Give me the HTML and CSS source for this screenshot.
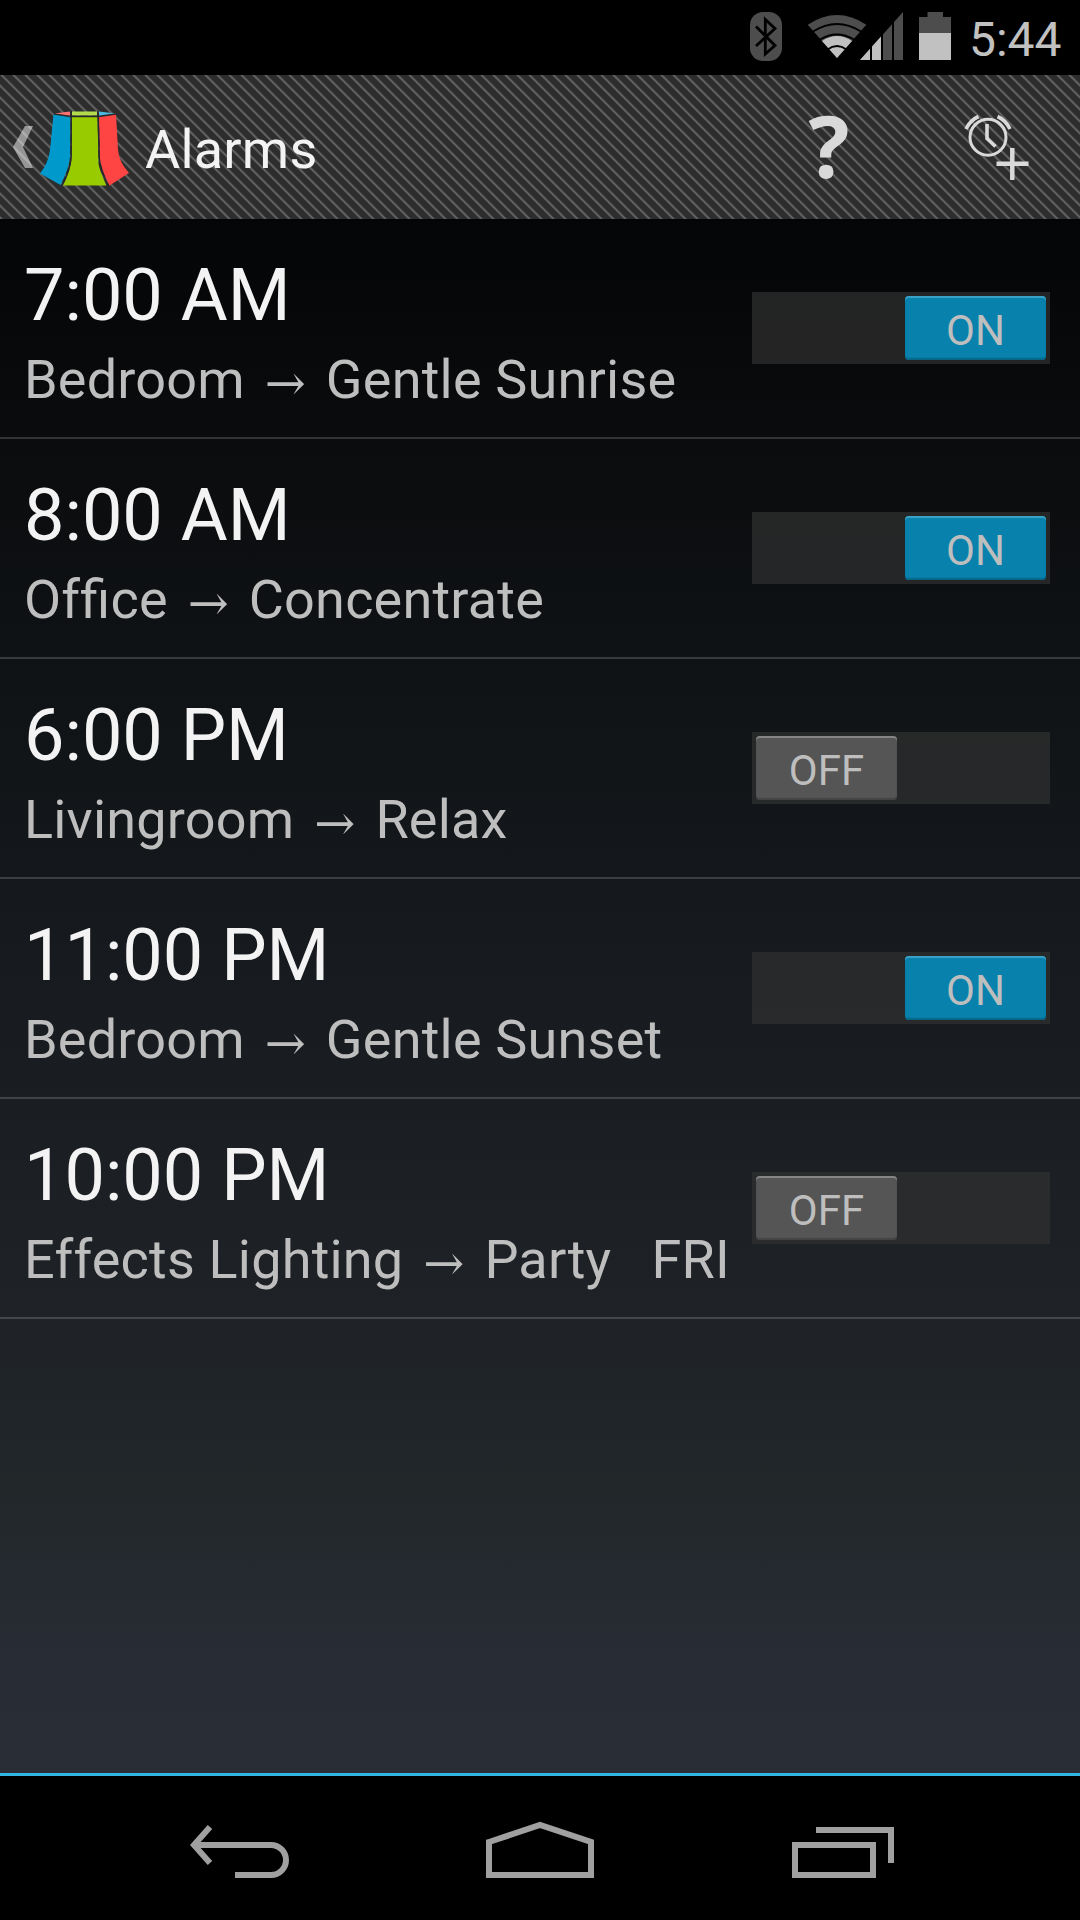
FILE: index.html
```html
<!DOCTYPE html>
<html lang="en">
<head>
<meta charset="utf-8">
<title>Alarms</title>
<link rel="stylesheet" href="styles.css">
</head>
<body>
<div class="screen">
  <div class="status">
    <svg class="status-icons" width="210" height="75" viewBox="0 0 210 75">
      <rect x="0" y="12" width="32" height="49" rx="13" fill="#4d4d4d"/>
      <path d="M6 26.5 25 45.5 15.3 54V19.500L25 28.500 6 46" fill="none" stroke="#000" stroke-width="2.800"/>
      <path d="M87 58 57.700 24.700Q87 5.500 116.300 24.700Z" fill="#4d4d4d"/>
      <path d="M87 58 72 41Q87 31 102 41Z" fill="#c1c1c1"/>
      <path d="M63 31.500Q87 16.500 111 31.500M70 39.500Q87 29.500 104 39.500M77.500 49.500Q87 42.500 96.500 49.500" fill="none" stroke="#000" stroke-width="2"/>
      <path d="M110 60 153 12V60Z" fill="#4d4d4d"/>
      <path d="M110 60 131 36.500V60Z" fill="#c1c1c1"/>
      <path d="M121 30V60M132 20V60M143 12V60" stroke="#000" stroke-width="2"/>
      <path d="M169 33V17H177.500V12H193V17H201V33Z" fill="#4d4d4d"/>
      <rect x="169" y="33" width="32" height="27" fill="#c1c1c1"/>
    </svg>
    <span class="clock">5:44</span>
  </div>
  <div class="bar">
    <svg class="up" width="130" height="144" viewBox="0 0 130 144">
      <path d="M25 51H33L23 72 33 93H25L13 72Z" fill="#fff" fill-opacity=".5"/>
      <path d="M54 38.500 70 36.500V41.500Z" fill="#ff7373"/>
      <path d="M72 36.500H97V40.500H72Z" fill="#b3dc4c"/>
      <path d="M99 36.500 116 38.500 99 41.500Z" fill="#4db8e0"/>
      <path d="M53.500 39 70.500 42 70 82Q69 94 60.500 110L40 98.500Q48 89 50 75Z" fill="#09c"/>
      <path d="M72 42H97.500L98.500 88Q98.500 93 106.500 110.500H63Q71 94 71.500 84Z" fill="#9c0"/>
      <path d="M99 42 116 39 118 75Q119 87 129 98L109.500 110.500Q101 94 100 84Z" fill="#f44"/>
      <path d="M71.200 36V82Q70 96 62 110.500M98 36 99.200 82Q99 92 108 110.500M54 39 71 41.500H98L116 39" fill="none" stroke="#26282a" stroke-width="1.400"/>
    </svg>
    <h1 class="title">Alarms</h1>
    <span class="help">?</span>
    <svg class="add" width="72" height="72" viewBox="0 0 72 72" fill="none" stroke="#d9d9d9">
      <circle cx="34" cy="26.300" r="18" stroke-width="3"/>
      <path d="M33 13V27.500L41.500 35.500" stroke-width="3.600"/>
      <path d="M12 18Q16.500 9 24.500 5.500M43.500 5.500Q51.500 9 56 18" stroke-width="3.600"/>
      <path d="M58.300 37V69M42.500 52.700H74.500" stroke-width="4.500"/>
    </svg>
  </div>
  <main class="list">
    <div class="row"><div class="info"><div class="time">7:00 AM</div><div class="sub">Bedroom<span class="arrow">→</span>Gentle Sunrise</div></div><div class="switch on"><span class="thumb">ON</span></div></div>
    <div class="row"><div class="info"><div class="time">8:00 AM</div><div class="sub">Of<span class="liga">fice</span><span class="arrow">→</span>Concentrate</div></div><div class="switch on"><span class="thumb">ON</span></div></div>
    <div class="row"><div class="info"><div class="time">6:00 PM</div><div class="sub">Livingroom<span class="arrow">→</span>Relax</div></div><div class="switch"><span class="thumb">OFF</span></div></div>
    <div class="row"><div class="info"><div class="time">11:00 PM</div><div class="sub">Bedroom<span class="arrow">→</span>Gentle Sunset</div></div><div class="switch on"><span class="thumb">ON</span></div></div>
    <div class="row"><div class="info"><div class="time">10:00 PM</div><div class="sub">Effects Lighting<span class="arrow">→</span>Party<span class="day">FRI</span></div></div><div class="switch"><span class="thumb">OFF</span></div></div>
  </main>
  <nav class="nav">
    <svg width="1080" height="144" viewBox="0 0 1080 144" fill="none" stroke="#a0a0a0" stroke-width="6">
      <path d="M210 51 194 69 210 87M194 69H271A15 15 0 0 1 271 99H235"/>
      <path d="M489 66 540 49 591 66V99H489Z"/>
      <path d="M795 69H873V99H795ZM816 54H891V87"/>
    </svg>
  </nav>
</div>
</body>
</html>
```
FILE: styles.css
```css
* { box-sizing: border-box; }
body { margin: 0; background: #000; font-family: Roboto, sans-serif; }
.screen { width: 1080px; height: 1920px; display: flex; flex-direction: column; overflow: hidden; }
.status { height: 75px; padding: 0 19px 0 0; display: flex; justify-content: flex-end; background: #000; }
.status-icons { margin-right: 9px; }
.clock { width: 92px; font-size: 48px; line-height: 79px; color: #c1c1c1; white-space: nowrap; }
.bar {
  height: 144px; display: flex; align-items: center;
  background: #2d2d2d linear-gradient(45deg, #606060 0 4.500%, #2d2d2d 8% 42%, #606060 45.500% 54.500%, #2d2d2d 58% 92%, #606060 95.500%) 1.500px 0 / 12px 12px;
}
.up { flex: none; }
.title { margin: 0 0 0 15px; width: 630px; font-size: 54px; font-weight: 400; color: #f3f3f3; line-height: 144px; padding-top: 5px; letter-spacing: .2px; }
.help { width: 108px; text-align: center; font: 700 86px/144px "Open Sans", sans-serif; color: #d9d9d9; padding-bottom: 5px; }
.add { margin-left: 71px; overflow: visible; }
.list {
  height: 1557px; border-bottom: 3px solid #33b5e5;
  background: linear-gradient(#040506, #121518 35%, #1c1f24 62%, #22272a 82%, #282c35 93%, #292d36);
}
.row { height: 220px; padding: 0 30px 0 24px; display: flex; justify-content: space-between; align-items: center; border-bottom: 2px solid rgba(255, 255, 255, .17); }
.info { white-space: nowrap; padding-top: 20px; }
.time { font-size: 72px; line-height: 84px; color: #f3f3f3; }
.sub { font-size: 54px; line-height: 84px; color: #bebebe; display: flex; letter-spacing: .2px; }
.liga { font-feature-settings: "liga"; }
.arrow { width: 81px; height: 84px; text-align: center; font-family: "DejaVu Serif", serif; font-size: 49px; line-height: 91px; }
.day { margin-left: 40px; }
.switch { flex: none; width: 298px; height: 72px; padding: 4px; display: flex; background: rgba(48, 48, 48, .7); }
.switch.on { justify-content: flex-end; }
.thumb {
  width: 141px; height: 64px; border-radius: 4px; background: #555; color: #bebebe;
  font-size: 42px; line-height: 70px; text-align: center;
  box-shadow: inset 0 2px 0 #858585, inset 0 -2px 1px #444;
}
.on .thumb { background: #0881ac; box-shadow: inset 0 2px 0 #39a2c6, inset 0 -2px 1px #076789; }
.nav { height: 144px; background: #000; }
```
